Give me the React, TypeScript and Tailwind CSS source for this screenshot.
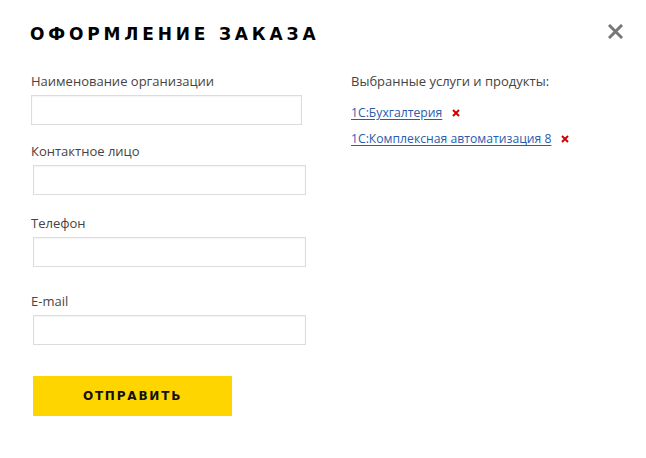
import React from "react";

const fields = [
  { label: "Наименование организации", labelTop: "mt-[72px]", box: "ml-0 w-[271px]" },
  { label: "Контактное лицо", labelTop: "mt-[17px]", box: "ml-[2px] w-[273px]" },
  { label: "Телефон", labelTop: "mt-[19px]", box: "ml-[2px] w-[273px]" },
  { label: "E-mail", labelTop: "mt-[25px]", box: "ml-[2px] w-[273px]" },
];

const links = ["1С:Бухгалтерия", "1С:Комплексная автоматизация 8"];

export default function App() {
  return (
    <div className="relative w-[646px] h-[458px] bg-white overflow-hidden font-['Open_Sans',sans-serif]">
      {/* Header */}
      <h1 className="absolute left-[30px] top-[23px] text-[17px] leading-[22px] font-black tracking-[0.225em] text-black font-['DejaVu_Sans',sans-serif]">
        ОФОРМЛЕНИЕ ЗАКАЗА
      </h1>
      <button className="absolute left-[607px] top-[23px] w-[17px] h-[17px] flex items-center justify-center">
        <svg width="15" height="15" viewBox="0 0 15 15">
          <path d="M2 2 L13 13 M13 2 L2 13" stroke="#777" strokeWidth="3" strokeLinecap="square" />
        </svg>
      </button>

      <div className="flex pl-[31px]">
        {/* Form */}
        <div className="w-[290px] flex flex-col">
          {fields.map((f) => (
            <div key={f.label} className="flex flex-col">
              <label className={`${f.labelTop} text-[13px] leading-[18px] text-[#444]`}>{f.label}</label>
              <input
                type="text"
                className={`${f.box} mt-[5px] h-[30px] border border-[#dcdcdc] bg-white shadow-[inset_0_1px_2px_rgba(0,0,0,0.05)] outline-none`}
              />
            </div>
          ))}
          <button className="ml-[2px] mt-[31px] w-[199px] h-[40px] bg-[#ffd500] text-[12px] font-bold tracking-[0.15em] text-[#111] font-['DejaVu_Sans',sans-serif]">
            ОТПРАВИТЬ
          </button>
        </div>

        {/* Selected */}
        <div className="ml-[30px] pt-[72px] flex flex-col">
          <p className="text-[13px] leading-[18px] text-[#444]">Выбранные услуги и продукты:</p>
          <ul className="mt-[14px] flex flex-col gap-[8px]">
            {links.map((l) => (
              <li key={l} className="flex items-center text-[12.2px] leading-[18px]">
                <a href="#" className="text-[#2a5cae] underline decoration-[#2a5cae] underline-offset-[2px]">
                  {l}
                </a>
                <svg className="ml-[10px]" width="8" height="8" viewBox="0 0 8 8">
                  <path d="M1 1 L7 7 M7 1 L1 7" stroke="#d40000" strokeWidth="2" />
                </svg>
              </li>
            ))}
          </ul>
        </div>
      </div>
    </div>
  );
}
